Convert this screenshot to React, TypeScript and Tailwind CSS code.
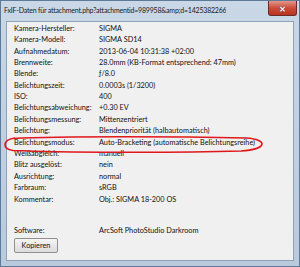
const rows: [string, string][] = [
  ["Kamera-Hersteller:", "SIGMA"],
  ["Kamera-Modell:", "SIGMA SD14"],
  ["Aufnahmedatum:", "2013-06-04 10:31:38 +02:00"],
  ["Brennweite:", "28.0mm (KB-Format entsprechend: 47mm)"],
  ["Blende:", "ƒ/8.0"],
  ["Belichtungszeit:", "0.0003s (1/3200)"],
  ["ISO:", "400"],
  ["Belichtungsabweichung:", "+0.30 EV"],
  ["Belichtungsmessung:", "Mittenzentriert"],
  ["Belichtung:", "Blendenpriorität (halbautomatisch)"],
  ["Belichtungsmodus:", "Auto-Bracketing (automatische Belichtungsreihe)"],
  ["Weißabgleich:", "manuell"],
  ["Blitz ausgelöst:", "nein"],
  ["Ausrichtung:", "normal"],
  ["Farbraum:", "sRGB"],
  ["Kommentar:", "Obj.: SIGMA 18-200 OS"],
];

function Row({ label, value }: { label: string; value: string }) {
  return (
    <div className="grid grid-cols-[85px_1fr] h-[11.4px] items-center whitespace-nowrap">
      <span>{label}</span>
      <span>{value}</span>
    </div>
  );
}

export default function App() {
  return (
    <div
      className="relative w-[300px] h-[267px] flex flex-col bg-gradient-to-b from-[#c9d7e6] to-[#b9cadd] border border-[#5d7a98] text-[7.3px] text-[#111] overflow-hidden"
      style={{ fontFamily: 'Lato, "Open Sans", sans-serif' }}
    >
      {/* title bar */}
      <div className="h-[20px] flex items-start justify-between shrink-0">
        <span className="min-w-0 overflow-hidden pl-[3px] pt-[4px] text-[7px] tracking-[-0.2px] text-[#1b1b1b] whitespace-nowrap">
          FxIF-Daten für attachment.php?attachmentid=989958&amp;amp;d=1425382266
        </span>
        <div className="mr-[2px] shrink-0 w-[29px] h-[15px] rounded-b-[3px] border border-t-0 border-[#6b2a2a] bg-gradient-to-b from-[#e2978a] via-[#cc4a3a] to-[#b8341f] flex items-center justify-center">
          <span className="text-white text-[11px] font-bold leading-none [text-shadow:0_0_1px_#333]">×</span>
        </div>
      </div>

      {/* client area */}
      <div className="mx-[5px] mb-[5px] flex-1 bg-[#f0f0f0] border border-[#8ea3bb] pl-[7px] pt-[1.5px] flex flex-col">
        {rows.map(([l, v]) => (
          <Row key={l} label={l} value={v} />
        ))}
        <div className="h-[20px]" />
        <Row label="Software:" value="ArcSoft PhotoStudio Darkroom" />
        <button className="mt-[1px] w-[44px] h-[15px] rounded-[2px] border border-[#8f8f8f] bg-gradient-to-b from-[#f5f5f5] to-[#dcdcdc] text-[7.3px] leading-none">
          Kopieren
        </button>
      </div>

      {/* hand-drawn red ellipse */}
      <svg className="absolute left-0 top-0 pointer-events-none" width="300" height="267">
        <path
          d="M12 137.5 C 60 135, 180 135.5, 245 137 C 268 138.5, 266 148.5, 240 150 C 170 152, 60 151.5, 12 149.5 C 1 148, 1 139, 14 137"
          fill="none"
          stroke="#e0171b"
          strokeWidth="1.6"
        />
      </svg>
    </div>
  );
}
